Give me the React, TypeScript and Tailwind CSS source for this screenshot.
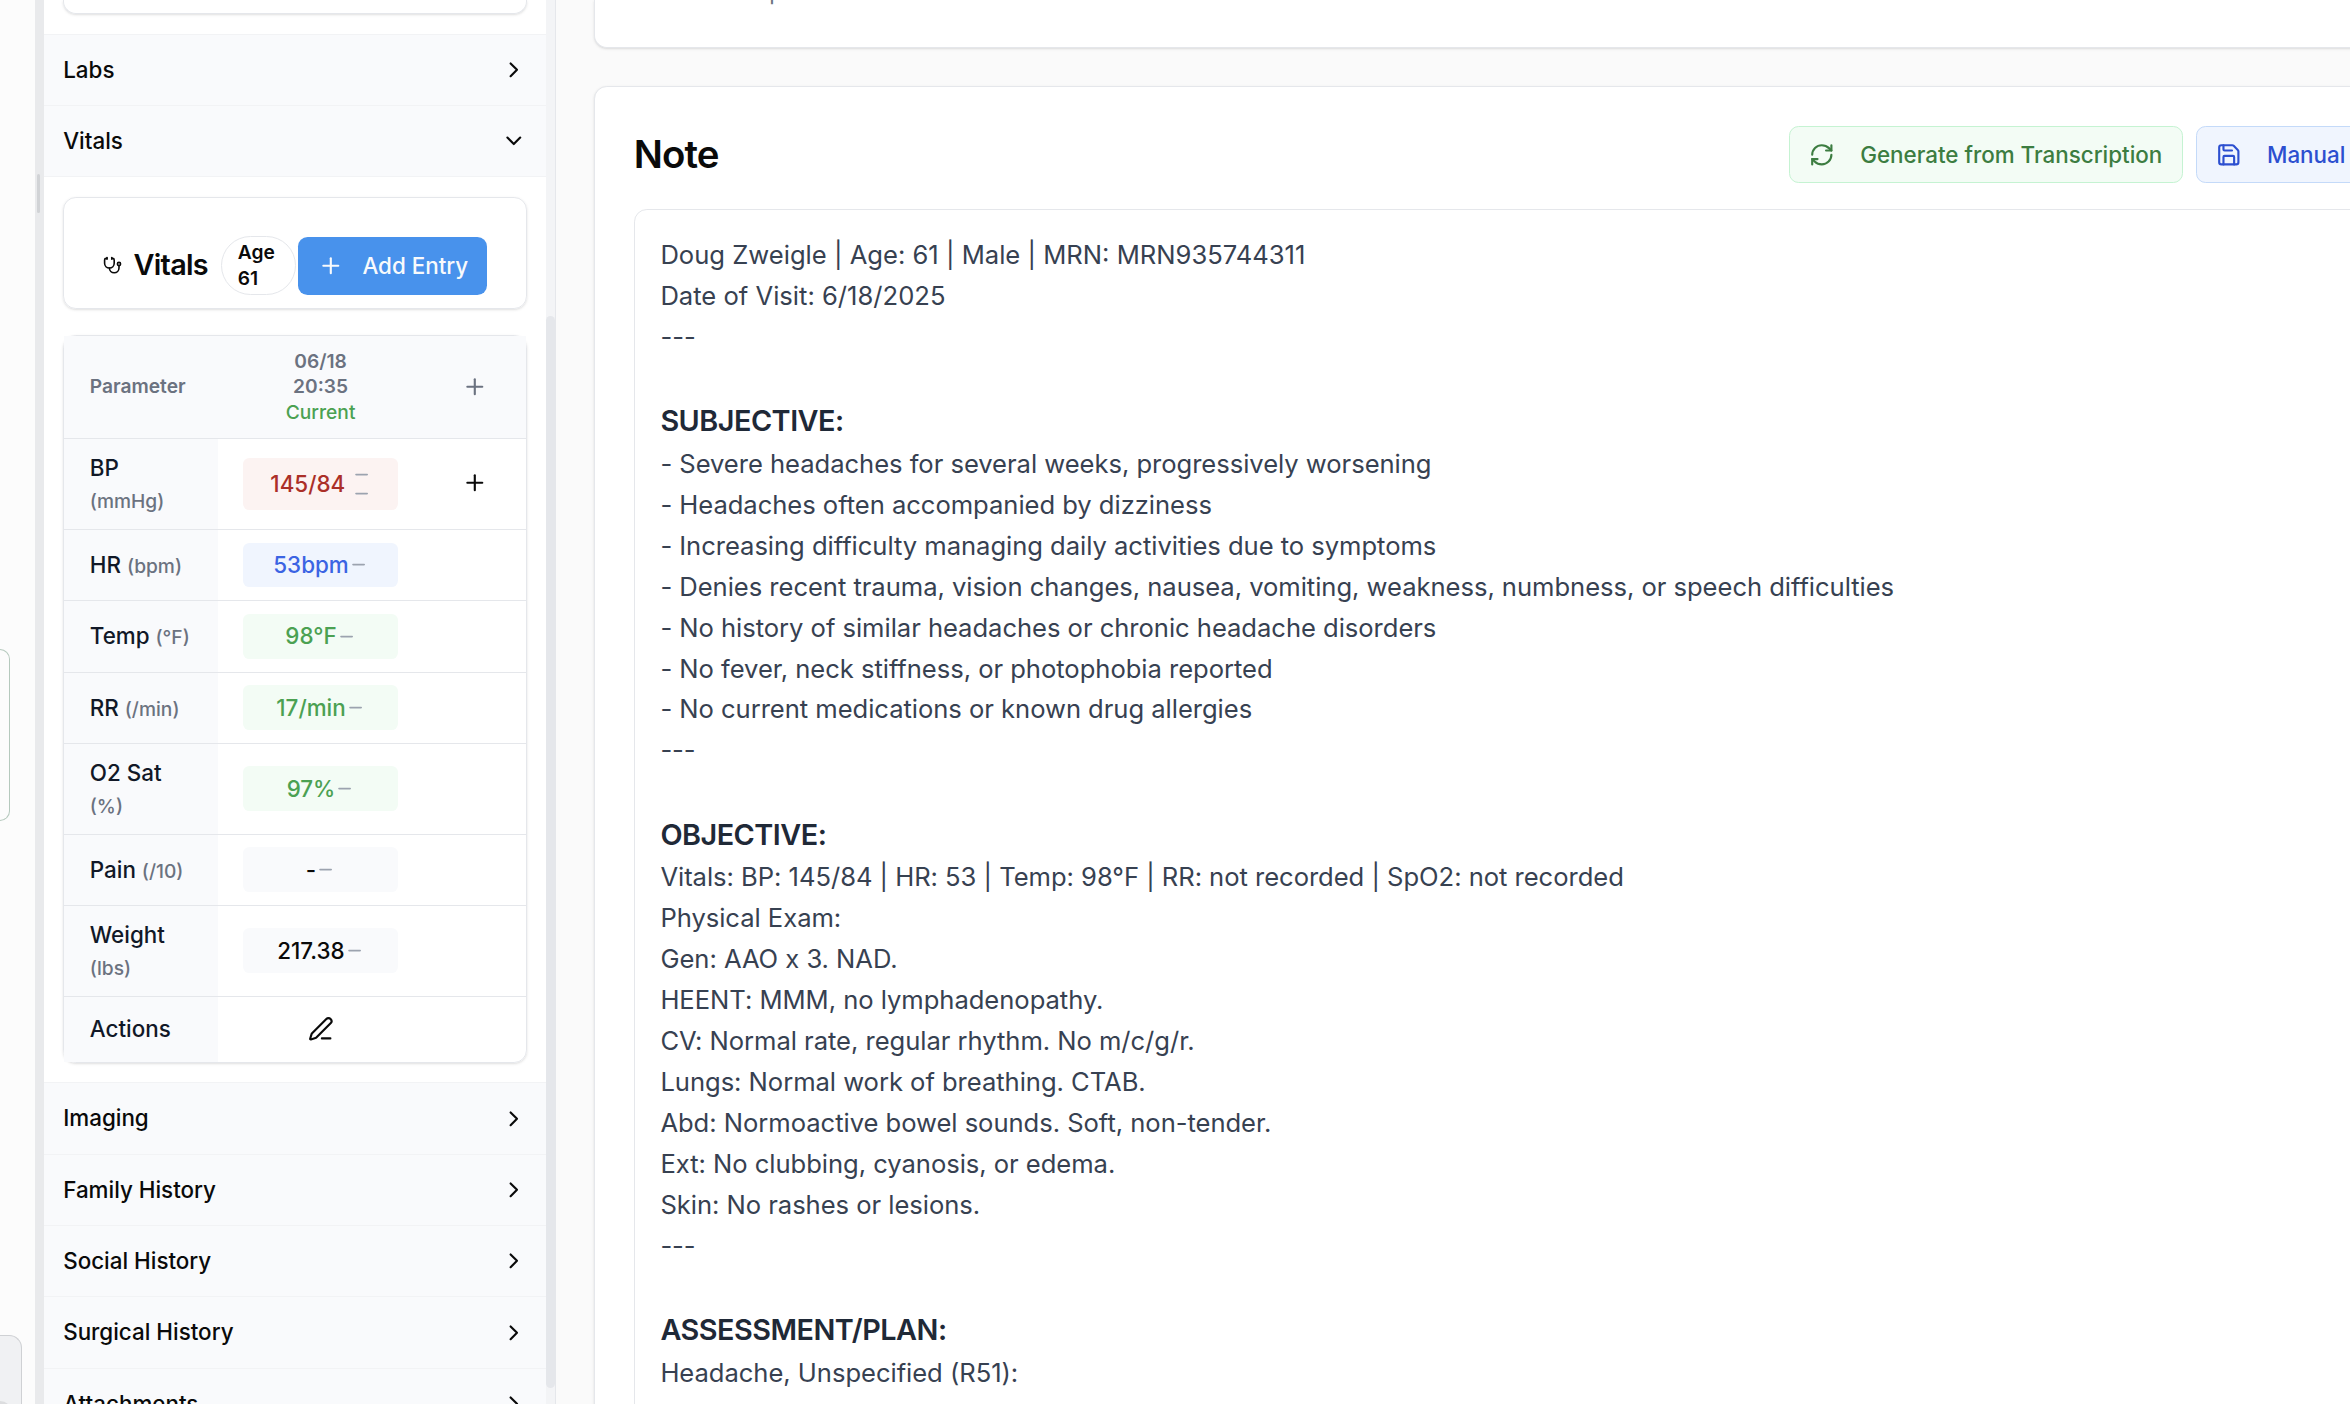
import React from "react";
import { ChevronDown, ChevronRight, Minus, PenLine, Plus, RefreshCw, Save, Stethoscope } from "lucide-react";

const subjective = [
  "- Severe headaches for several weeks, progressively worsening",
  "- Headaches often accompanied by dizziness",
  "- Increasing difficulty managing daily activities due to symptoms",
  "- Denies recent trauma, vision changes, nausea, vomiting, weakness, numbness, or speech difficulties",
  "- No history of similar headaches or chronic headache disorders",
  "- No fever, neck stiffness, or photophobia reported",
  "- No current medications or known drug allergies",
  "---",
];

const objective = [
  "Vitals: BP: 145/84 | HR: 53 | Temp: 98°F | RR: not recorded | SpO2: not recorded",
  "Physical Exam:",
  "Gen: AAO x 3. NAD.",
  "HEENT: MMM, no lymphadenopathy.",
  "CV: Normal rate, regular rhythm. No m/c/g/r.",
  "Lungs: Normal work of breathing. CTAB.",
  "Abd: Normoactive bowel sounds. Soft, non-tender.",
  "Ext: No clubbing, cyanosis, or edema.",
  "Skin: No rashes or lesions.",
  "---",
];

const plan = ["Headache, Unspecified (R51):"];

type Vital = { name: string; unit: string; value: string; tone: string; wrap?: boolean; pair?: boolean };

const green = "bg-[#f3fcf5] text-[#4ba152]";
const plain = "bg-[#f9fafc] text-[#0a0a0a]";

const vitals: Vital[] = [
  { name: "BP", unit: "(mmHg)", value: "145/84", tone: "bg-[#fcf3f2] text-[#ab2f28]", wrap: true, pair: true },
  { name: "HR", unit: "(bpm)", value: "53bpm", tone: "bg-[#f0f5fe] text-[#3b64e3]" },
  { name: "Temp", unit: "(°F)", value: "98°F", tone: green },
  { name: "RR", unit: "(/min)", value: "17/min", tone: green },
  { name: "O2 Sat", unit: "(%)", value: "97%", tone: green, wrap: true },
  { name: "Pain", unit: "(/10)", value: "-", tone: plain },
  { name: "Weight", unit: "(lbs)", value: "217.38", tone: plain, wrap: true },
];

function SectionRow({ label, open = false }: { label: string; open?: boolean }) {
  const Chevron = open ? ChevronDown : ChevronRight;
  return (
    <div className="flex shrink-0 items-center justify-between border-b border-[#f2f3f5] bg-[#f9fafc] p-3">
      <span className="text-sm font-medium">{label}</span>
      <Chevron className="size-4" />
    </div>
  );
}

function VitalRow({ v }: { v: Vital }) {
  return (
    <div className="grid grid-cols-[153.6px_1fr_102.4px] border-b border-[#e5e7eb]">
      <div className="flex items-center bg-[#f9fafc] px-4 py-2 text-sm font-medium whitespace-nowrap text-[#111827]">
        <div>
          {v.name}
          {v.wrap ? <br /> : " "}
          <span className="text-xs leading-none font-medium text-[#6b7280]">{v.unit}</span>
        </div>
      </div>
      <div className="flex items-center px-4 py-2">
        <div className={`flex w-full items-center justify-center rounded-sm py-1 text-sm font-medium ${v.tone}`}>
          <span>{v.value}</span>
          {v.pair ? (
            <span className="ml-1 flex flex-col text-[#9ca3af]">
              <Minus className="size-3" />
              <Minus className="size-3" />
            </span>
          ) : (
            <Minus className="size-3 text-[#9ca3af]" />
          )}
        </div>
      </div>
      <div className="flex items-center justify-center">{v.pair && <Plus className="mb-[3px] size-4" />}</div>
    </div>
  );
}

function NoteHeading({ children }: { children: React.ReactNode }) {
  return (
    <h3 className="mt-[40.5px] text-lg leading-[45.4px] font-semibold tracking-[-0.5px] text-[#1f2937]">{children}</h3>
  );
}

function Lines({ items }: { items: string[] }) {
  return (
    <div className="tracking-[-0.04px]">
      {items.map((t, i) => (
        <p key={i}>{t}</p>
      ))}
    </div>
  );
}

export default function App() {
  return (
    <div className="flex h-[1404px] w-[2350px] overflow-hidden bg-[#fafafa] font-['Inter',sans-serif] text-[#0a0a0a] [--radius-lg:12.8px] [--radius-md:9.6px] [--radius-sm:6.4px] [--spacing:6.4px] [--text-lg:28.8px] [--text-sm:22.4px] [--text-xs:19.2px]">
      {/* Edge of the transcript column */}
      <div className="flex w-[35px] shrink-0 flex-col items-start bg-[#fcfcfc]">
        <div className="mt-[649px] h-[172px] w-[10px] shrink-0 rounded-r-lg border border-l-0 border-[#b5c9bd]" />
        <div className="mt-[514px] flex h-[120px] w-[22px] shrink-0 flex-col rounded-tr-lg border border-b-0 border-l-0 border-[#cfd1d4] bg-[#f0f1f3]">
          <div className="mt-[65px] h-10 w-[12px] rounded-tr-lg bg-[#dcdddf]" />
        </div>
      </div>

      {/* Resize handle */}
      <div className="w-[9px] shrink-0 bg-[#e9eaec] pt-[174px] pl-[2px]">
        <div className="h-[39px] w-[3px] rounded-full bg-[#d1d3d6]" />
      </div>

      {/* Chart sidebar */}
      <aside className="flex w-[502px] shrink-0 flex-col overflow-hidden bg-white">
        <div className="h-[34.6px] shrink-0 border-b border-[#f2f3f5] px-3">
          <div className="h-[14px] rounded-b-lg border border-t-0 border-[#e5e7eb] shadow-sm" />
        </div>
        <SectionRow label="Labs" />
        <SectionRow label="Vitals" open />

        <div className="shrink-0 border-b border-[#f2f3f5] px-3 pt-3 pb-[19.6px]">
          <div className="flex items-center justify-between rounded-lg border border-[#e5e7eb] px-6 pt-6 pb-2 shadow-sm">
            <div className="flex items-center gap-2">
              <Stethoscope className="size-3 shrink-0" />
              <span className="-ml-px text-lg leading-none font-semibold tracking-tight">Vitals</span>
              <span className="w-[75.5px] shrink-0 rounded-full border border-[#e5e7eb] px-2.5 py-0.5 text-xs font-semibold">
                Age
                <br />
                61
              </span>
            </div>
            <button className="flex h-9 w-[189px] shrink-0 items-center gap-3 rounded-md bg-[#4892ec] px-3 text-sm font-medium whitespace-nowrap text-[#f8fafc]">
              <Plus className="size-4 shrink-0" />
              Add Entry
            </button>
          </div>

          <div className="mt-4 rounded-lg border border-[#e5e7eb] shadow-sm">
            <div className="grid grid-cols-[153.6px_1fr_102.4px] items-center border-b border-[#e5e7eb] bg-[#f9fafc] py-2 text-xs font-semibold text-[#6b7280]">
              <div className="px-4">Parameter</div>
              <div className="text-center">
                06/18
                <br />
                20:35
                <div className="font-medium text-[#4ba152]">Current</div>
              </div>
              <Plus className="mb-px size-4 justify-self-center" />
            </div>
            {vitals.map((v) => (
              <VitalRow key={v.name} v={v} />
            ))}
            <div className="grid h-[65px] grid-cols-[153.6px_1fr_102.4px]">
              <div className="flex items-center bg-[#f9fafc] px-4 text-sm font-medium text-[#111827]">Actions</div>
              <div className="flex items-center justify-center">
                <PenLine className="size-4" />
              </div>
            </div>
          </div>
        </div>

        <SectionRow label="Imaging" />
        <SectionRow label="Family History" />
        <SectionRow label="Social History" />
        <SectionRow label="Surgical History" />
        <SectionRow label="Attachments" />
      </aside>

      {/* Sidebar scrollbar */}
      <div className="w-[10px] shrink-0 border-r border-[#e5e7eb] bg-[#f3f4f6] pt-[316px]">
        <div className="h-[1072px] rounded-full bg-[#e5e7eb]" />
      </div>

      {/* Note area */}
      <main className="flex w-[1900px] shrink-0 flex-col pl-[38.4px]">
        <section className="h-[48px] shrink-0 overflow-hidden rounded-b-lg border border-t-0 border-[#e5e7eb] bg-white pl-[56px] shadow-sm">
          <p className="-mt-[24px] text-sm text-[#6b7280]">Assess for possible headache and exam outcomes</p>
        </section>
        <section className="mt-[38px] h-[1500px] shrink-0 rounded-lg border border-[#e5e7eb] bg-white p-6 shadow-sm">
          <div className="flex items-center">
            <h2 className="w-[1155px] shrink-0 text-[38.4px] leading-none font-semibold tracking-[-0.9px]">Note</h2>
            <div className="mt-px flex shrink-0 gap-2 text-sm font-medium whitespace-nowrap">
              <button className="flex h-[57px] w-[394px] shrink-0 items-center gap-4 rounded-md border border-[#c5f3d2] bg-[#f3fcf5] px-3 text-[#3c7d41]">
                <RefreshCw className="size-4 shrink-0" />
                Generate from Transcription
              </button>
              <button className="flex h-[57px] w-[240px] shrink-0 items-center gap-4 rounded-md border border-[#c4daf9] bg-[#f0f5fe] px-3 text-[#2c4fd0]">
                <Save className="size-4 shrink-0" />
                Manual
              </button>
            </div>
          </div>
          <div className="mt-4 h-[1400px] rounded-lg border border-[#e5e7eb] px-4 pt-[25px] text-[25.6px] leading-[40.96px] whitespace-nowrap text-[#374151]">
            <p>Doug Zweigle | Age: 61 | Male | MRN: MRN935744311</p>
            <p>Date of Visit: 6/18/2025</p>
            <p>---</p>
            <NoteHeading>SUBJECTIVE:</NoteHeading>
            <Lines items={subjective} />
            <NoteHeading>OBJECTIVE:</NoteHeading>
            <Lines items={objective} />
            <NoteHeading>ASSESSMENT/PLAN:</NoteHeading>
            <Lines items={plan} />
          </div>
        </section>
      </main>
    </div>
  );
}
